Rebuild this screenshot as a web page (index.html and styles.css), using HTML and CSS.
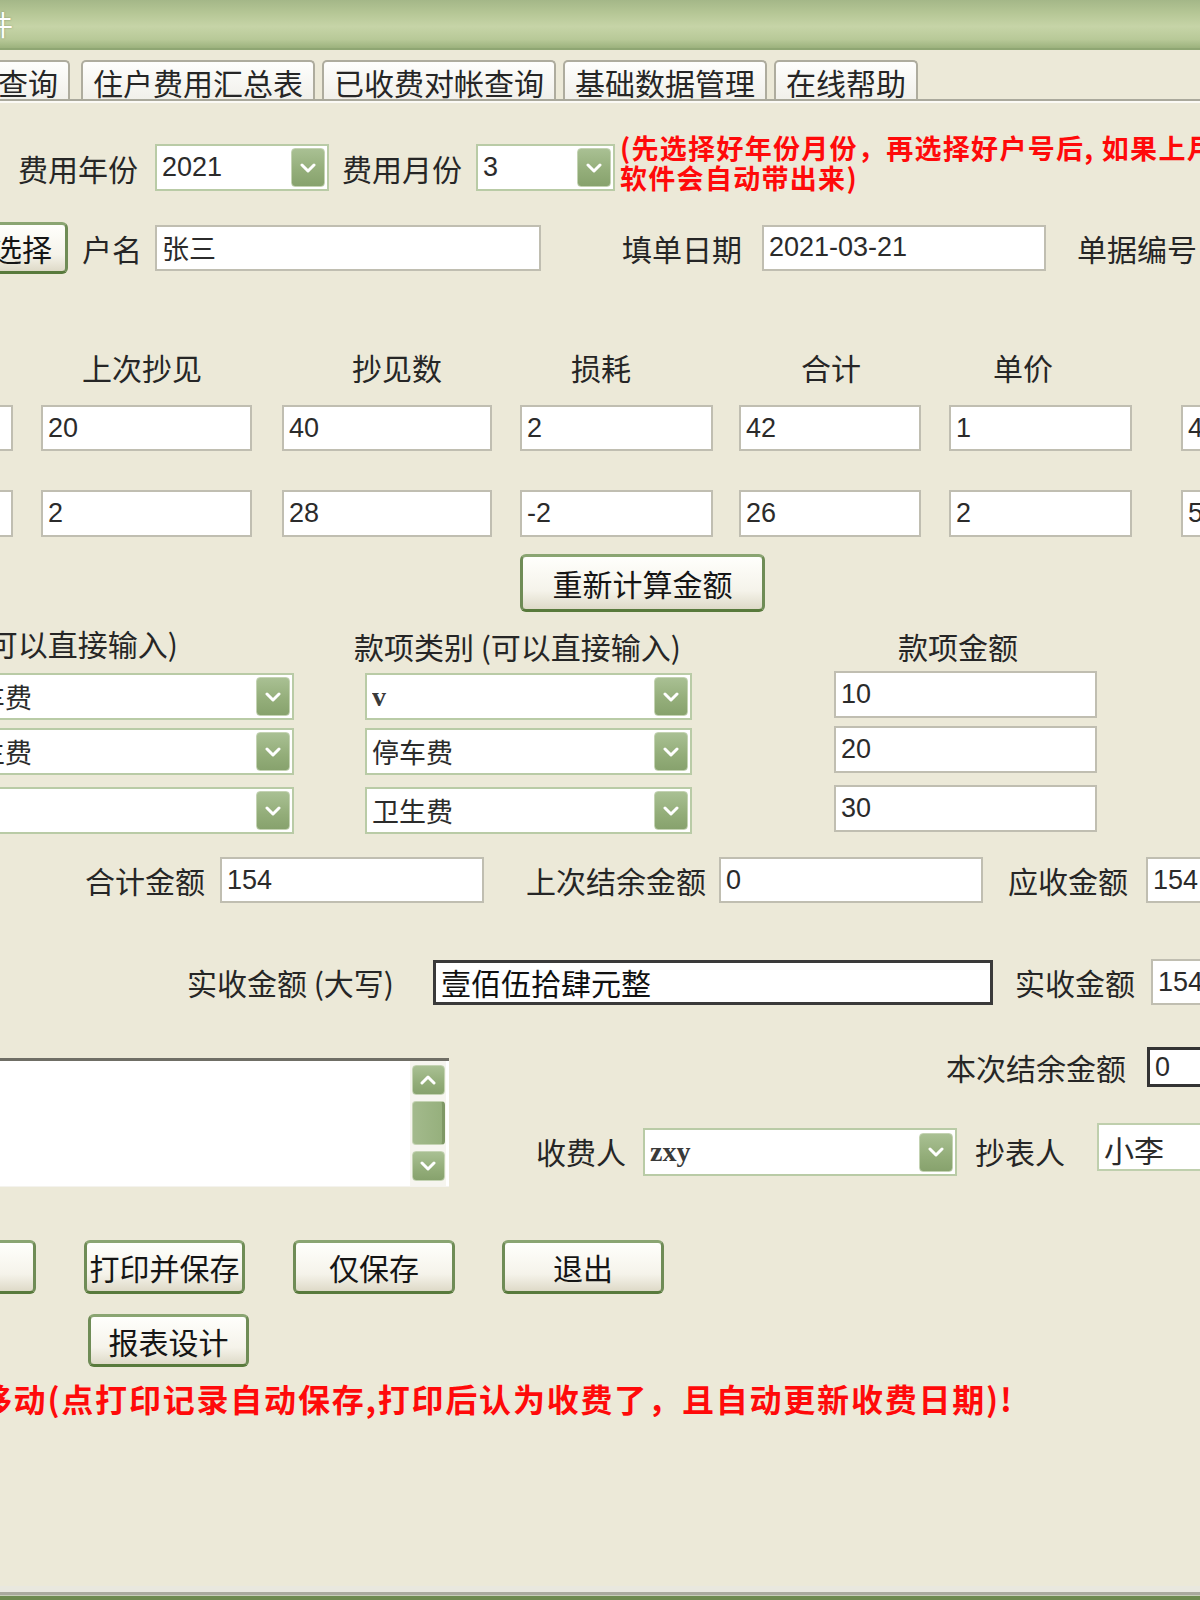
FILE: index.html
```html
<!DOCTYPE html>
<html lang="zh-CN">
<head>
<meta charset="utf-8">
<title>收费单录入</title>
<link rel="stylesheet" href="styles.css">
</head>
<body>
<div class="window">
  <div class="titlebar"><span class="title-text">物业收费管理软件</span></div>

  <div class="tabstrip">
    <div class="tab tab-first">收费查询</div>
    <div class="tab">住户费用汇总表</div>
    <div class="tab">已收费对帐查询</div>
    <div class="tab">基础数据管理</div>
    <div class="tab">在线帮助</div>
  </div>
  <div class="panel-edge"></div>

  <div class="form">
    <!-- billing period -->
    <div class="row row-period">
      <span class="lbl">费用年份</span>
      <div class="combo combo-year"><span class="val">2021</span><span class="drop"><svg viewBox="0 0 16 10" width="16" height="10"><path d="M2 2 L8 8 L14 2" fill="none" stroke="#fff" stroke-width="3" stroke-linecap="round" stroke-linejoin="round"/></svg></span></div>
      <span class="lbl lbl-month">费用月份</span>
      <div class="combo combo-month"><span class="val">3</span><span class="drop"><svg viewBox="0 0 16 10" width="16" height="10"><path d="M2 2 L8 8 L14 2" fill="none" stroke="#fff" stroke-width="3" stroke-linecap="round" stroke-linejoin="round"/></svg></span></div>
      <p class="note">(先选择好年份月份，再选择好户号后, 如果上月有结余<br>软件会自动带出来)</p>
    </div>

    <!-- household -->
    <div class="row row-owner">
      <div class="btn btn-pick">选择</div>
      <span class="lbl lbl-owner">户名</span>
      <div class="field f-name">张三</div>
      <span class="lbl lbl-date">填单日期</span>
      <div class="field f-date">2021-03-21</div>
      <span class="lbl lbl-no">单据编号</span>
    </div>

    <!-- meter readings -->
    <div class="row row-head">
      <span class="lbl h-prev">上次抄见</span>
      <span class="lbl h-cur">抄见数</span>
      <span class="lbl h-loss">损耗</span>
      <span class="lbl h-sum">合计</span>
      <span class="lbl h-price">单价</span>
    </div>
    <div class="row row-meter row-meter-a">
      <div class="field f-cut"></div>
      <div class="field f-prev">20</div>
      <div class="field f-cur">40</div>
      <div class="field f-loss">2</div>
      <div class="field f-sum">42</div>
      <div class="field f-price">1</div>
      <div class="field f-amt">42</div>
    </div>
    <div class="row row-meter row-meter-b">
      <div class="field f-cut"></div>
      <div class="field f-prev">2</div>
      <div class="field f-cur">28</div>
      <div class="field f-loss">-2</div>
      <div class="field f-sum">26</div>
      <div class="field f-price">2</div>
      <div class="field f-amt">52</div>
    </div>

    <div class="row row-recalc">
      <div class="btn btn-recalc">重新计算金额</div>
    </div>

    <!-- extra items -->
    <div class="row row-head2">
      <span class="lbl h-kind-cut">费用类别 (可以直接输入)</span>
      <span class="lbl h-kind">款项类别 (可以直接输入)</span>
      <span class="lbl h-money">款项金额</span>
    </div>
    <div class="row row-item row-item-1">
      <div class="combo combo-cut"><span class="val">停车费</span><span class="drop"><svg viewBox="0 0 16 10" width="16" height="10"><path d="M2 2 L8 8 L14 2" fill="none" stroke="#fff" stroke-width="3" stroke-linecap="round" stroke-linejoin="round"/></svg></span></div>
      <div class="combo combo-kind"><span class="val val-serif">v</span><span class="drop"><svg viewBox="0 0 16 10" width="16" height="10"><path d="M2 2 L8 8 L14 2" fill="none" stroke="#fff" stroke-width="3" stroke-linecap="round" stroke-linejoin="round"/></svg></span></div>
      <div class="field f-money">10</div>
    </div>
    <div class="row row-item row-item-2">
      <div class="combo combo-cut"><span class="val">卫生费</span><span class="drop"><svg viewBox="0 0 16 10" width="16" height="10"><path d="M2 2 L8 8 L14 2" fill="none" stroke="#fff" stroke-width="3" stroke-linecap="round" stroke-linejoin="round"/></svg></span></div>
      <div class="combo combo-kind"><span class="val">停车费</span><span class="drop"><svg viewBox="0 0 16 10" width="16" height="10"><path d="M2 2 L8 8 L14 2" fill="none" stroke="#fff" stroke-width="3" stroke-linecap="round" stroke-linejoin="round"/></svg></span></div>
      <div class="field f-money">20</div>
    </div>
    <div class="row row-item row-item-3">
      <div class="combo combo-cut"><span class="val"></span><span class="drop"><svg viewBox="0 0 16 10" width="16" height="10"><path d="M2 2 L8 8 L14 2" fill="none" stroke="#fff" stroke-width="3" stroke-linecap="round" stroke-linejoin="round"/></svg></span></div>
      <div class="combo combo-kind"><span class="val">卫生费</span><span class="drop"><svg viewBox="0 0 16 10" width="16" height="10"><path d="M2 2 L8 8 L14 2" fill="none" stroke="#fff" stroke-width="3" stroke-linecap="round" stroke-linejoin="round"/></svg></span></div>
      <div class="field f-money">30</div>
    </div>

    <!-- totals -->
    <div class="row row-total">
      <span class="lbl t-sum">合计金额</span>
      <div class="field f-total">154</div>
      <span class="lbl t-last">上次结余金额</span>
      <div class="field f-total f-last">0</div>
      <span class="lbl t-due">应收金额</span>
      <div class="field f-due">154</div>
    </div>
    <div class="row row-paid">
      <span class="lbl p-words">实收金额 (大写)</span>
      <div class="field f-words">壹佰伍拾肆元整</div>
      <span class="lbl p-paid">实收金额</span>
      <div class="field f-paid">154</div>
    </div>

    <!-- remarks and staff -->
    <div class="row row-memo">
      <div class="memo">
        <div class="memo-text"></div>
        <div class="scrollbar">
          <span class="sb-btn"><svg viewBox="0 0 16 10" width="16" height="10"><path d="M2 8 L8 2 L14 8" fill="none" stroke="#fff" stroke-width="3" stroke-linecap="round" stroke-linejoin="round"/></svg></span>
          <span class="sb-thumb"></span>
          <span class="sb-btn"><svg viewBox="0 0 16 10" width="16" height="10"><path d="M2 2 L8 8 L14 2" fill="none" stroke="#fff" stroke-width="3" stroke-linecap="round" stroke-linejoin="round"/></svg></span>
        </div>
      </div>
      <div class="memo-side">
        <div class="side-balance">
          <span class="lbl b-label">本次结余金额</span>
          <div class="field f-balance">0</div>
        </div>
        <div class="side-staff">
          <span class="lbl s-cashier">收费人</span>
          <div class="combo combo-cashier"><span class="val val-serif">zxy</span><span class="drop"><svg viewBox="0 0 16 10" width="16" height="10"><path d="M2 2 L8 8 L14 2" fill="none" stroke="#fff" stroke-width="3" stroke-linecap="round" stroke-linejoin="round"/></svg></span></div>
          <span class="lbl s-reader">抄表人</span>
          <div class="field f-reader">小李</div>
        </div>
      </div>
    </div>

    <!-- actions -->
    <div class="row row-actions">
      <div class="btn btn-cut">打印</div>
      <div class="btn btn-print">打印并保存</div>
      <div class="btn btn-save">仅保存</div>
      <div class="btn btn-exit">退出</div>
    </div>
    <div class="row row-design">
      <div class="btn btn-design">报表设计</div>
    </div>
    <p class="footnote">可移动(点打印记录自动保存,打印后认为收费了，且自动更新收费日期)!</p>
  </div>

  <div class="statusbar"></div>
</div>
</body>
</html>
```

FILE: styles.css
```css
* { box-sizing: border-box; }

html, body {
  margin: 0;
  padding: 0;
}

body {
  width: 1200px;
  height: 1600px;
  overflow: hidden;
  background: #ece9d8;
  font-family: "Noto Sans CJK SC", "Liberation Sans", sans-serif;
  color: #2a2a2a;
}

.window {
  display: flex;
  flex-direction: column;
  height: 1600px;
  overflow: hidden;
}

/* ---------- caption ---------- */
.titlebar {
  height: 50px;
  flex: none;
  display: flex;
  align-items: center;
  white-space: nowrap;
  overflow: hidden;
  background: linear-gradient(#a4b788 0%, #b6c796 28%, #c6d4a7 55%, #b8c998 82%, #9cb27d 100%);
  border-bottom: 2px solid #8fa673;
}

.title-text {
  margin-left: -211px;
  font-size: 28px;
  color: #fff;
  text-shadow: 0 0 2px rgba(80, 100, 60, 0.6);
}

/* ---------- tabs ---------- */
.tabstrip {
  height: 49px;
  flex: none;
  padding-top: 10px;
  display: flex;
  gap: 7px;
  white-space: nowrap;
}

.tab {
  height: 39px;
  padding: 2px 10px 0;
  display: flex;
  align-items: center;
  flex: none;
  font-size: 30px;
  color: #262626;
  background: linear-gradient(#fefefd, #f1f0ea);
  border: 2px solid #aeac9e;
  border-bottom: none;
  border-radius: 5px 5px 0 0;
}

.tab-first {
  margin-left: -70px;
  margin-right: 4px;
  width: 140px;
  justify-content: flex-end;
  padding-right: 10px;
}

.panel-edge {
  height: 4px;
  flex: none;
  border-top: 2px solid #aaa99c;
  background: #fbfaf5;
}

/* ---------- generic controls ---------- */
.form {
  flex: none;
  white-space: nowrap;
}

.row {
  display: flex;
  align-items: center;
  flex: none;
}

.lbl {
  flex: none;
  font-size: 30px;
  line-height: 1;
  color: #262626;
}

.field {
  flex: none;
  height: 46px;
  display: flex;
  align-items: center;
  padding-left: 5px;
  overflow: hidden;
  background: #fff;
  border: 2px solid #c0beb1;
  font-family: "Liberation Sans", "Noto Sans CJK SC", sans-serif;
  font-size: 27px;
  color: #2b2b2b;
}

.combo {
  flex: none;
  height: 47px;
  display: flex;
  align-items: center;
  padding: 0 2px 0 5px;
  overflow: hidden;
  background: #fff;
  border: 2px solid #b9cba6;
  font-family: "Liberation Sans", "Noto Sans CJK SC", sans-serif;
  font-size: 27px;
  color: #2b2b2b;
}

.combo .val {
  flex: 1;
  overflow: hidden;
}

.val-serif {
  font-family: "Liberation Serif", serif;
  font-size: 28px;
  font-weight: bold;
  color: #3a3a3a;
}

.drop,
.sb-btn {
  flex: none;
  width: 34px;
  height: 39px;
  display: flex;
  align-items: center;
  justify-content: center;
  border: 1px solid #c4d3b3;
  border-radius: 4px;
  background: linear-gradient(#a9c093, #93ad79 60%, #87a26d);
}

.btn {
  flex: none;
  display: flex;
  align-items: center;
  justify-content: center;
  font-size: 30px;
  color: #151515;
  background: linear-gradient(#fffffc, #f5f3ea 65%, #dedac8);
  border: 3px solid #6f8c56;
  border-top-color: #8aa572;
  border-bottom-color: #587a3c;
  border-radius: 6px;
  overflow: hidden;
}

/* ---------- period row ---------- */
.row-period {
  margin-top: 41px;
  height: 47px;
  padding-left: 18px;
}

.combo-year { margin-left: 17px; width: 174px; }
.lbl-month { margin-left: 13px; }
.combo-month { margin-left: 14px; width: 139px; }

.note {
  flex: none;
  margin: -9px 0 0 5px;
  font-size: 27px;
  line-height: 30px;
  font-weight: bold;
  letter-spacing: 1.3px;
  color: #ff0a0a;
}

/* ---------- household row ---------- */
.row-owner {
  margin-top: 33px;
  height: 47px;
}

.btn-pick { margin-left: -24px; width: 92px; height: 52px; }
.lbl-owner { margin-left: 14px; }
.f-name { margin-left: 13px; width: 386px; }
.lbl-date { margin-left: 81px; }
.f-date { margin-left: 20px; width: 284px; }
.lbl-no { margin-left: 31px; }

/* ---------- meter grid ---------- */
.row-head {
  margin-top: 81px;
  height: 30px;
}

.h-prev { margin-left: 82px; }
.h-cur { margin-left: 150px; }
.h-loss { margin-left: 129px; }
.h-sum { margin-left: 170px; }
.h-price { margin-left: 132px; }

.row-meter-a { margin-top: 23px; height: 46px; }
.row-meter-b { margin-top: 39px; height: 47px; }
.row-meter-b .field { height: 47px; }

.f-cut { margin-left: -50px; width: 63px; }
.f-prev { margin-left: 28px; width: 211px; }
.f-cur { margin-left: 30px; width: 210px; }
.f-loss { margin-left: 28px; width: 193px; }
.f-sum { margin-left: 26px; width: 182px; }
.f-price { margin-left: 28px; width: 183px; }
.f-amt { margin-left: 49px; width: 100px; }

.row-recalc {
  margin-top: 17px;
  height: 58px;
}

.btn-recalc { margin-left: 520px; width: 245px; height: 58px; }

/* ---------- extra items ---------- */
.row-head2 {
  margin-top: 18px;
  height: 32px;
}

.h-kind-cut { margin-left: -162px; width: 340px; text-align: right; margin-top: -6px; }
.h-kind { margin-left: 176px; width: 335px; }
.h-money { margin-left: 209px; }

.row-item { height: 47px; }
.row-item-1 { margin-top: 11px; }
.row-item-2 { margin-top: 8px; }
.row-item-3 { margin-top: 12px; }

.combo-cut { margin-left: -56px; width: 350px; }
.combo-kind { margin-left: 71px; width: 327px; }
.f-money {
  margin-left: 142px;
  width: 263px;
  height: 47px;
  align-self: flex-start;
  margin-top: -2px;
}

/* ---------- totals ---------- */
.row-total {
  margin-top: 23px;
  height: 46px;
}

.t-sum { margin-left: 85px; }
.f-total { margin-left: 15px; width: 264px; }
.t-last { margin-left: 42px; }
.f-last { margin-left: 13px; }
.t-due { margin-left: 25px; }
.f-due { margin-left: 18px; width: 100px; }

.row-paid {
  margin-top: 56px;
  height: 46px;
}

.p-words { margin-left: 187px; width: 211px; }
.f-words {
  margin-left: 35px;
  width: 560px;
  height: 45px;
  border: 3px solid #3a3a3a;
  font-size: 30px;
  color: #111;
}
.p-paid { margin-left: 22px; }
.f-paid { margin-left: 16px; width: 100px; }

/* ---------- remarks and staff ---------- */
.row-memo {
  margin-top: 42px;
  height: 140px;
  align-items: flex-start;
}

.memo {
  flex: none;
  margin-left: -30px;
  margin-top: 11px;
  width: 479px;
  height: 129px;
  display: flex;
  background: #fff;
  border-top: 3px solid #6f6e65;
  border-bottom: 1px solid #f4f3ee;
}

.memo-text { flex: 1; }

.scrollbar {
  flex: none;
  width: 36px;
  margin-right: 3px;
  padding-top: 4px;
  display: flex;
  flex-direction: column;
  align-items: center;
  gap: 6px;
  background: #f6f5ef;
}

.sb-btn {
  width: 33px;
  height: 30px;
}

.sb-thumb {
  flex: none;
  width: 33px;
  height: 44px;
  border: 1px solid #c4d3b3;
  border-right: 3px solid #7f9866;
  border-radius: 4px;
  background: linear-gradient(90deg, #a3ba8c, #96b07d);
}

.memo-side {
  flex: none;
  display: flex;
  flex-direction: column;
}

.side-balance {
  display: flex;
  align-items: center;
  height: 40px;
}

.b-label { margin-left: 497px; }
.f-balance {
  margin-left: 21px;
  width: 100px;
  height: 40px;
  border: 3px solid #333;
}

.side-staff {
  display: flex;
  align-items: flex-start;
  margin-top: 36px;
  height: 53px;
}

.side-staff .lbl { line-height: 48px; margin-top: 4px; }
.s-cashier { margin-left: 87px; }
.combo-cashier { margin-left: 17px; width: 314px; height: 48px; margin-top: 5px; }
.s-reader { margin-left: 18px; }
.f-reader {
  margin-left: 32px;
  width: 110px;
  height: 48px;
  border-color: #bfcfad;
  font-size: 30px;
  align-items: flex-start;
  padding-top: 2px;
}

/* ---------- actions ---------- */
.row-actions {
  margin-top: 53px;
  height: 54px;
}

.row-actions .btn { height: 54px; }
.btn-cut { margin-left: -70px; width: 106px; color: transparent; }
.btn-print { margin-left: 48px; width: 161px; }
.btn-save { margin-left: 48px; width: 162px; }
.btn-exit { margin-left: 47px; width: 162px; }

.row-design {
  margin-top: 20px;
  height: 53px;
}

.btn-design { margin-left: 88px; width: 161px; height: 53px; }

.footnote {
  margin: 11px 0 0 -54px;
  height: 40px;
  font-size: 32px;
  line-height: 40px;
  font-weight: bold;
  letter-spacing: 1.8px;
  color: #ff0a0a;
}

/* ---------- bottom frame ---------- */
.statusbar {
  margin-top: auto;
  flex: none;
  height: 14px;
  background: linear-gradient(#e9e8df 0, #e9e8df 6px, #a9a99d 6px, #a9a99d 9px, #c7cdb8 9px, #c7cdb8 10px, #6e8a50 10px);
}
```
